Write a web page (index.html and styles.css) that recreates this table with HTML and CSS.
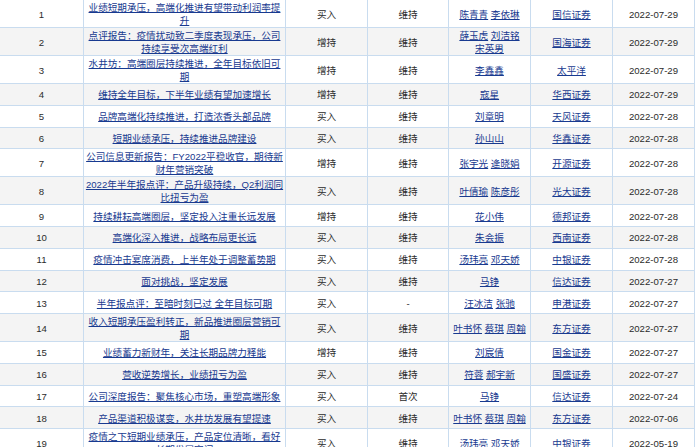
FILE: index.html
```html
<!DOCTYPE html>
<html lang="zh-CN">
<head>
<meta charset="utf-8">
<title>研报列表</title>
<link rel="stylesheet" href="styles.css">
</head>
<body>
<table class="report-table">
  <colgroup>
    <col class="c-no"><col class="c-title"><col class="c-rate"><col class="c-chg"><col class="c-author"><col class="c-org"><col class="c-date">
  </colgroup>
  <tbody>
    <tr><td>1</td><td><a href="#">业绩短期承压，高端化推进有望带动利润率提升</a></td><td>买入</td><td>维持</td><td><a href="#">陈青青</a> <a href="#">李依琳</a></td><td><a href="#">国信证券</a></td><td>2022-07-29</td></tr>
    <tr><td>2</td><td><a href="#">点评报告：疫情扰动致二季度表现承压，公司持续享受次高端红利</a></td><td>增持</td><td>维持</td><td><a href="#">薛玉虎</a> <a href="#">刘洁铭</a> <a href="#">宋英男</a></td><td><a href="#">国海证券</a></td><td>2022-07-29</td></tr>
    <tr><td>3</td><td><a href="#">水井坊：高端圈层持续推进，全年目标依旧可期</a></td><td>增持</td><td>维持</td><td><a href="#">李鑫鑫</a></td><td><a href="#">太平洋</a></td><td>2022-07-29</td></tr>
    <tr><td>4</td><td><a href="#">维持全年目标，下半年业绩有望加速增长</a></td><td>增持</td><td>维持</td><td><a href="#">寇星</a></td><td><a href="#">华西证券</a></td><td>2022-07-29</td></tr>
    <tr><td>5</td><td><a href="#">品牌高端化持续推进，打造浓香头部品牌</a></td><td>买入</td><td>维持</td><td><a href="#">刘章明</a></td><td><a href="#">天风证券</a></td><td>2022-07-28</td></tr>
    <tr><td>6</td><td><a href="#">短期业绩承压，持续推进品牌建设</a></td><td>买入</td><td>维持</td><td><a href="#">孙山山</a></td><td><a href="#">华鑫证券</a></td><td>2022-07-28</td></tr>
    <tr><td>7</td><td><a href="#">公司信息更新报告：FY2022平稳收官，期待新财年营销突破</a></td><td>增持</td><td>维持</td><td><a href="#">张宇光</a> <a href="#">逄晓娟</a></td><td><a href="#">开源证券</a></td><td>2022-07-28</td></tr>
    <tr><td>8</td><td><a href="#">2022年半年报点评：产品升级持续，Q2利润同比扭亏为盈</a></td><td>买入</td><td>维持</td><td><a href="#">叶倩瑜</a> <a href="#">陈彦彤</a></td><td><a href="#">光大证券</a></td><td>2022-07-28</td></tr>
    <tr><td>9</td><td><a href="#">持续耕耘高端圈层，坚定投入注重长远发展</a></td><td>增持</td><td>维持</td><td><a href="#">花小伟</a></td><td><a href="#">德邦证券</a></td><td>2022-07-28</td></tr>
    <tr><td>10</td><td><a href="#">高端化深入推进，战略布局更长远</a></td><td>买入</td><td>维持</td><td><a href="#">朱会振</a></td><td><a href="#">西南证券</a></td><td>2022-07-28</td></tr>
    <tr><td>11</td><td><a href="#">疫情冲击宴席消费，上半年处于调整蓄势期</a></td><td>买入</td><td>维持</td><td><a href="#">汤玮亮</a> <a href="#">邓天娇</a></td><td><a href="#">中银证券</a></td><td>2022-07-28</td></tr>
    <tr><td>12</td><td><a href="#">面对挑战，坚定发展</a></td><td>买入</td><td>维持</td><td><a href="#">马铮</a></td><td><a href="#">信达证券</a></td><td>2022-07-27</td></tr>
    <tr><td>13</td><td><a href="#">半年报点评：至暗时刻已过 全年目标可期</a></td><td>买入</td><td>-</td><td><a href="#">汪冰洁</a> <a href="#">张驰</a></td><td><a href="#">申港证券</a></td><td>2022-07-27</td></tr>
    <tr><td>14</td><td><a href="#">收入短期承压盈利转正，新品推进圈层营销可期</a></td><td>买入</td><td>维持</td><td><a href="#">叶书怀</a> <a href="#">蔡琪</a> <a href="#">周翰</a></td><td><a href="#">东方证券</a></td><td>2022-07-27</td></tr>
    <tr><td>15</td><td><a href="#">业绩蓄力新财年，关注长期品牌力释能</a></td><td>增持</td><td>维持</td><td><a href="#">刘宸倩</a></td><td><a href="#">国金证券</a></td><td>2022-07-27</td></tr>
    <tr><td>16</td><td><a href="#">营收逆势增长，业绩扭亏为盈</a></td><td>买入</td><td>维持</td><td><a href="#">符蓉</a> <a href="#">郝宇新</a></td><td><a href="#">国盛证券</a></td><td>2022-07-27</td></tr>
    <tr><td>17</td><td><a href="#">公司深度报告：聚焦核心市场，重塑高端形象</a></td><td>买入</td><td>首次</td><td><a href="#">马铮</a></td><td><a href="#">信达证券</a></td><td>2022-07-24</td></tr>
    <tr><td>18</td><td><a href="#">产品渠道积极谋变，水井坊发展有望提速</a></td><td>买入</td><td>维持</td><td><a href="#">叶书怀</a> <a href="#">蔡琪</a> <a href="#">周翰</a></td><td><a href="#">东方证券</a></td><td>2022-07-06</td></tr>
    <tr><td>19</td><td><a href="#">疫情之下短期业绩承压，产品定位清晰，看好长期发展空间</a></td><td>买入</td><td>维持</td><td><a href="#">汤玮亮</a> <a href="#">邓天娇</a></td><td><a href="#">中银证券</a></td><td>2022-05-19</td></tr>
  </tbody>
</table>
</body>
</html>
```

FILE: styles.css
```css
html, body {
  margin: 0;
  padding: 0;
  background: #ffffff;
}

body {
  font-family: "Liberation Sans", "Noto Sans CJK SC", sans-serif;
  font-size: 9.6px;
  color: #2b2b2b;
  overflow: hidden;
}

.report-table {
  border-collapse: collapse;
  table-layout: fixed;
  width: 695px;
  margin: -1px 0 0 -1px;
}

.c-no { width: 84px; }
.c-title { width: 202px; }
.c-rate { width: 82px; }
.c-chg { width: 81px; }
.c-author { width: 82px; }
.c-org { width: 82px; }
.c-date { width: 82px; }

.report-table td {
  border: 1px solid #c9dcef;
  padding: 1px 1px 0 1px;
  height: 19.75px;
  line-height: 13px;
  text-align: center;
  vertical-align: middle;
}

.report-table tr:nth-child(even) td {
  background: #f4f4f4;
}

.report-table a {
  color: #183a90;
  text-decoration: underline;
}

.report-table td:nth-child(5) a {
  white-space: nowrap;
}
```
